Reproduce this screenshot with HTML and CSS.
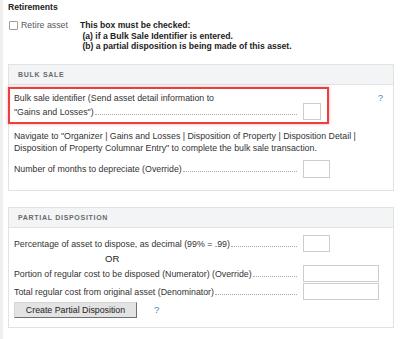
FILE: index.html
```html
<!DOCTYPE html>
<html>
<head>
<meta charset="utf-8">
<link rel="stylesheet" href="styles.css">
</head>
<body>
<div class="page">
  <div class="title">Retirements</div>
  <div class="retire">
    <div class="retire-opt"><span class="checkbox"></span><span class="retire-label">Retire asset</span></div>
    <div class="note">This box must be checked:<br>&nbsp;(a) if a Bulk Sale Identifier is entered.<br>&nbsp;(b) a partial disposition is being made of this asset.</div>
  </div>

  <div class="panel">
    <div class="panel-head">Bulk sale</div>
    <div class="panel-body bulk">
      <div class="top-row">
        <div class="highlight">
          <div class="line1">Bulk sale identifier (Send asset detail information to</div>
          <div class="field tight">
            <div class="lead"><span class="txt">"Gains and Losses")</span><span class="dots"></span></div>
            <span class="input w18"></span>
          </div>
        </div>
        <span class="help top-help">?</span>
      </div>
      <div class="nav">Navigate to "Organizer | Gains and Losses | Disposition of Property | Disposition Detail |<br>Disposition of Property Columnar Entry" to complete the bulk sale transaction.</div>
      <div class="field months">
        <div class="lead"><span class="txt">Number of months to depreciate (Override)</span><span class="dots"></span></div>
        <span class="input w27 h18"></span>
      </div>
    </div>
  </div>

  <div class="panel partial">
    <div class="panel-head">Partial disposition</div>
    <div class="panel-body pd">
      <div class="field">
        <div class="lead"><span class="txt">Percentage of asset to dispose, as decimal (99% = .99)</span><span class="dots"></span></div>
        <span class="input w27"></span>
      </div>
      <div class="or">OR</div>
      <div class="field">
        <div class="lead"><span class="txt">Portion of regular cost to be disposed (Numerator) (Override)</span><span class="dots"></span></div>
        <span class="input w76"></span>
      </div>
      <div class="field gap1">
        <div class="lead"><span class="txt">Total regular cost from original asset (Denominator)</span><span class="dots"></span></div>
        <span class="input w76"></span>
      </div>
      <div class="btn-row">
        <button class="btn" type="button">Create Partial Disposition</button>
        <span class="help">?</span>
      </div>
    </div>
  </div>
</div>
</body>
</html>
```

FILE: styles.css
```css
html, body {
  margin: 0;
  padding: 0;
  background: #ffffff;
}
body {
  font-family: "Liberation Sans", Arial, sans-serif;
  font-size: 8.8px;
  color: #333333;
}
.page {
  box-sizing: border-box;
  min-height: 339px;
  border-left: 3px solid #efefef;
  padding: 2px 6px 0 5px;
}
.title {
  font-weight: bold;
  font-size: 8.6px;
  line-height: 11px;
  color: #222222;
}
.retire {
  display: flex;
  margin-top: 7px;
}
.retire-opt {
  width: 72px;
  display: flex;
  align-items: flex-start;
}
.checkbox {
  box-sizing: border-box;
  width: 9px;
  height: 9px;
  margin: 1px 0 0 1px;
  border: 1px solid #9c9c9c;
  border-radius: 1px;
  background: #fff;
}
.retire-label {
  margin-left: 3px;
  line-height: 11px;
  color: #5a5a5a;
}
.note {
  font-weight: bold;
  font-size: 8.6px;
  line-height: 10.5px;
  color: #222222;
}
.panel {
  border: 1px solid #e2e2e2;
  margin-top: 12.5px;
}
.panel.partial {
  margin-top: 16px;
}
.panel-head {
  height: 19px;
  display: flex;
  align-items: center;
  padding-left: 9px;
  background: #f3f4f6;
  border-bottom: 1px solid #e2e2e2;
  font-weight: bold;
  font-size: 7px;
  letter-spacing: 0.7px;
  text-transform: uppercase;
  color: #6a6a6a;
}
.panel-body {
  padding: 0 0 12px 5px;
}
.top-row {
  display: flex;
  align-items: flex-start;
  margin-top: 2px;
}
.highlight {
  box-sizing: border-box;
  width: 321px;
  margin-left: -6px;
  border: 2px solid #e8403f;
  box-shadow: 0 0 3px rgba(232, 64, 63, 0.45);
  padding: 3px 6px 2px 4px;
}
.line1 {
  line-height: 12px;
}
.field {
  display: flex;
  align-items: center;
  line-height: 12px;
}
.field.tight {
  margin-top: -1px;
}
.lead {
  width: 283px;
  display: flex;
  margin-right: 6px;
}
.txt {
  flex: none;
  white-space: nowrap;
}
.dots {
  flex: 1;
  min-width: 0;
  height: 0;
  align-self: flex-end;
  margin: 0 0 3px 1px;
  border-bottom: 1px dotted #a8a8a8;
}
.input {
  box-sizing: border-box;
  height: 17px;
  border: 1px solid #cdcdcd;
  background: #fff;
}
.w18 { width: 18px; }
.w27 { width: 27px; }
.w76 { width: 76px; }
.h18 { height: 18px; }
.help {
  color: #4a86c5;
  font-size: 9.5px;
  line-height: 12px;
}
.top-help {
  margin-left: auto;
  margin-right: 10px;
  margin-top: 5px;
}
.nav {
  margin-top: 6px;
  line-height: 12px;
}
.months {
  margin-top: 6px;
}
.pd {
  padding-top: 7px;
  padding-bottom: 9px;
}
.or {
  line-height: 13px;
  padding-left: 91px;
  font-size: 9.5px;
  color: #222;
}
.gap1 {
  margin-top: 1px;
}
.btn-row {
  display: flex;
  align-items: center;
  margin-top: 2px;
}
.btn {
  box-sizing: border-box;
  width: 123px;
  height: 16px;
  padding: 0;
  margin: 0;
  font-family: "Liberation Sans", Arial, sans-serif;
  font-size: 8.8px;
  color: #222;
  background: #e3e3e3;
  border: 1px solid;
  border-color: #d6d6d6 #6f6f6f #6f6f6f #d6d6d6;
  border-radius: 0;
}
.btn-row .help {
  margin-left: 17px;
}
```
